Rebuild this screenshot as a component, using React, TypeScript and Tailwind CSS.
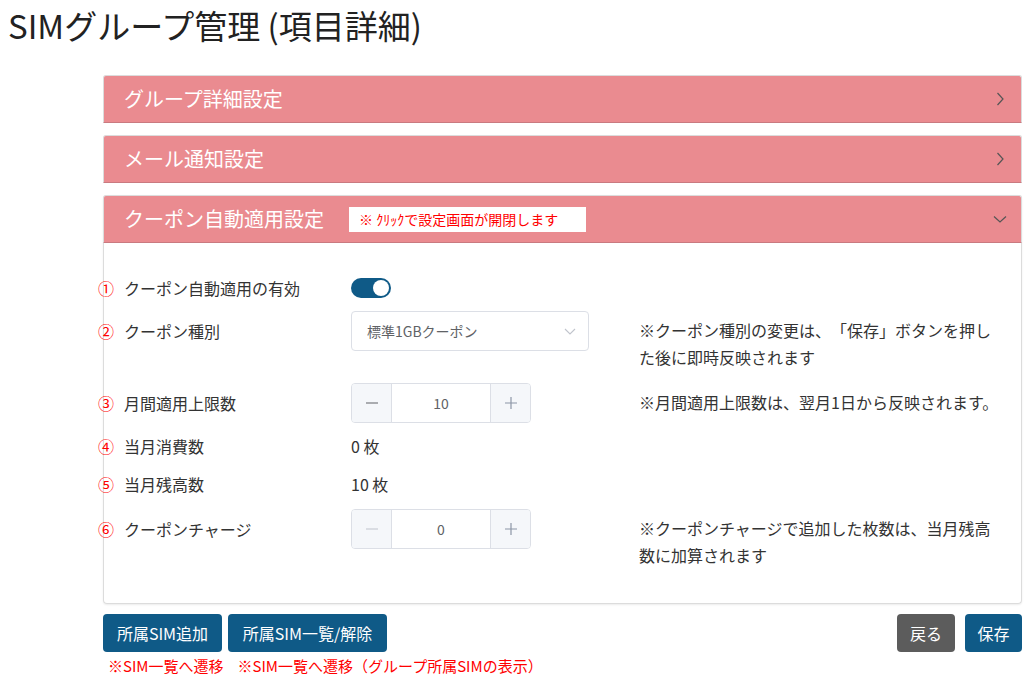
import React from "react";

const font = { fontFamily: '"Noto Sans CJK JP", "Noto Sans", sans-serif' };

function Chevron({ down }: { down?: boolean }) {
  return (
    <svg width="14" height="14" viewBox="0 0 14 14" fill="none" stroke="#555" strokeWidth="1.2">
      {down ? <path d="M1 4.5 L7 10 L13 4.5" /> : <path d="M4.5 1 L10 7 L4.5 13" />}
    </svg>
  );
}

function Header({ title, down, badge }: { title: string; down?: boolean; badge?: boolean }) {
  return (
    <div className="flex h-[48px] items-center justify-between rounded-t-[3px] border border-[#dcdcdc] border-b-[#c97a80] bg-[#ea8b90] pl-[20px] pr-[14px]">
      <div className="flex items-center">
        <span className="text-[20px] text-white">{title}</span>
        {badge && (
          <span className="ml-[25px] flex h-[25px] w-[237px] items-center bg-white pl-[10px] text-[14px] text-[#ff0000]">
            ※ ｸﾘｯｸで設定画面が開閉します
          </span>
        )}
      </div>
      <Chevron down={down} />
    </div>
  );
}

function Label({ n, text }: { n: string; text: string }) {
  return (
    <div className="ml-[-6px] flex w-[253px] items-center">
      <span className="w-[16px] text-center text-[16px] text-[#ff0000]">{n}</span>
      <span className="ml-[10px] text-[16px] text-[#333]">{text}</span>
    </div>
  );
}

function Stepper({ value, minusDisabled }: { value: string; minusDisabled?: boolean }) {
  return (
    <div className="flex h-[40px] w-[180px] overflow-hidden rounded-[4px] border border-[#dcdfe6]">
      <div className={`flex w-[40px] items-center justify-center border-r border-[#dcdfe6] bg-[#f5f7fa] ${minusDisabled ? "text-[#c0c4cc]" : "text-[#606266]"}`}>
        <svg width="14" height="14" viewBox="0 0 14 14"><path d="M1 7 H13" stroke="currentColor" strokeWidth="1.2" /></svg>
      </div>
      <div className="flex flex-1 items-center justify-center text-[14px] text-[#606266]">{value}</div>
      <div className="flex w-[40px] items-center justify-center border-l border-[#dcdfe6] bg-[#f5f7fa] text-[#8c95a6]">
        <svg width="14" height="14" viewBox="0 0 14 14"><path d="M1 7 H13 M7 1 V13" stroke="currentColor" strokeWidth="1.2" /></svg>
      </div>
    </div>
  );
}

export default function App() {
  return (
    <div className="min-h-[683px] w-[1029px] bg-white text-[#333] [text-spacing-trim:space-all]" style={font}>
      <h1 className="pl-[8px] pt-[2px] text-[33px] leading-[46px] text-[#222]">SIMグループ管理 (項目詳細)</h1>
      <div className="ml-[103px] mr-[7px] mt-[27px] flex flex-col gap-[12px]">
        <Header title="グループ詳細設定" />
        <Header title="メール通知設定" />
        <div className="rounded-[4px] shadow-[0_1px_2px_rgba(0,0,0,0.08)]">
          <Header title="クーポン自動適用設定" down badge />
          <div className="flex flex-col rounded-b-[4px] border border-t-0 border-[#dcdcdc] pb-[34px] pt-[35px]">
            {/* row 1 */}
            <div className="flex h-[20px] items-center">
              <Label n="①" text="クーポン自動適用の有効" />
              <div className="relative h-[20px] w-[40px] rounded-full bg-[#0f5a87]">
                <div className="absolute right-[2px] top-[2px] h-[16px] w-[16px] rounded-full bg-white" />
              </div>
            </div>
            {/* row 2 */}
            <div className="mt-[13px] flex items-start">
              <div className="flex h-[40px] items-center">
                <Label n="②" text="クーポン種別" />
              </div>
              <div className="flex h-[40px] w-[238px] items-center justify-between rounded-[4px] border border-[#dcdfe6] pl-[15px] pr-[12px] text-[14px] text-[#606266]">
                <span>標準1GBクーポン</span>
                <svg width="12" height="12" viewBox="0 0 12 12" fill="none" stroke="#c0c4cc" strokeWidth="1.1"><path d="M1 4 L6 9 L11 4" /></svg>
              </div>
              <div className="ml-[50px] w-[362px] pt-[6px] text-[16px] leading-[27px] text-[#333]">
                ※クーポン種別の変更は、「保存」ボタンを押した後に即時反映されます
              </div>
            </div>
            {/* row 3 */}
            <div className="mt-[12px] flex items-start">
              <div className="flex h-[40px] items-center">
                <Label n="③" text="月間適用上限数" />
              </div>
              <Stepper value="10" />
              <div className="ml-[108px] whitespace-nowrap pt-[6px] text-[16px] leading-[27px] text-[#333]">
                ※月間適用上限数は、翌月1日から反映されます。
              </div>
            </div>
            {/* row 4 */}
            <div className="mt-[11px] flex h-[24px] items-center">
              <Label n="④" text="当月消費数" />
              <span className="text-[16px] text-[#333]">0 枚</span>
            </div>
            {/* row 5 */}
            <div className="mt-[14px] flex h-[24px] items-center">
              <Label n="⑤" text="当月残高数" />
              <span className="text-[16px] text-[#333]">10 枚</span>
            </div>
            {/* row 6 */}
            <div className="mt-[13px] flex items-start">
              <div className="flex h-[40px] items-center">
                <Label n="⑥" text="クーポンチャージ" />
              </div>
              <Stepper value="0" minusDisabled />
              <div className="ml-[108px] w-[362px] pt-[6px] text-[16px] leading-[27px] text-[#333]">
                ※クーポンチャージで追加した枚数は、当月残高数に加算されます
              </div>
            </div>
          </div>
        </div>
      </div>
      {/* buttons */}
      <div className="ml-[103px] mr-[7px] mt-[10px] flex items-start justify-between">
        <div className="flex flex-col">
          <div className="flex gap-[6px]">
            <button className="h-[38px] w-[119px] rounded-[4px] bg-[#0f5a87] text-[16px] text-white">所属SIM追加</button>
            <button className="h-[38px] w-[159px] rounded-[4px] bg-[#0f5a87] text-[16px] text-white">所属SIM一覧/解除</button>
          </div>
          <div className="mt-[4px] flex text-[15px] leading-[20px] text-[#ff0000]">
            <span className="ml-[5px]">※SIM一覧へ遷移</span>
            <span className="ml-[14px]">※SIM一覧へ遷移（グループ所属SIMの表示）</span>
          </div>
        </div>
        <div className="flex gap-[10px]">
          <button className="h-[38px] w-[58px] rounded-[4px] bg-[#5c5c5c] text-[16px] text-white">戻る</button>
          <button className="h-[38px] w-[57px] rounded-[4px] bg-[#0f5a87] text-[16px] text-white">保存</button>
        </div>
      </div>
    </div>
  );
}
